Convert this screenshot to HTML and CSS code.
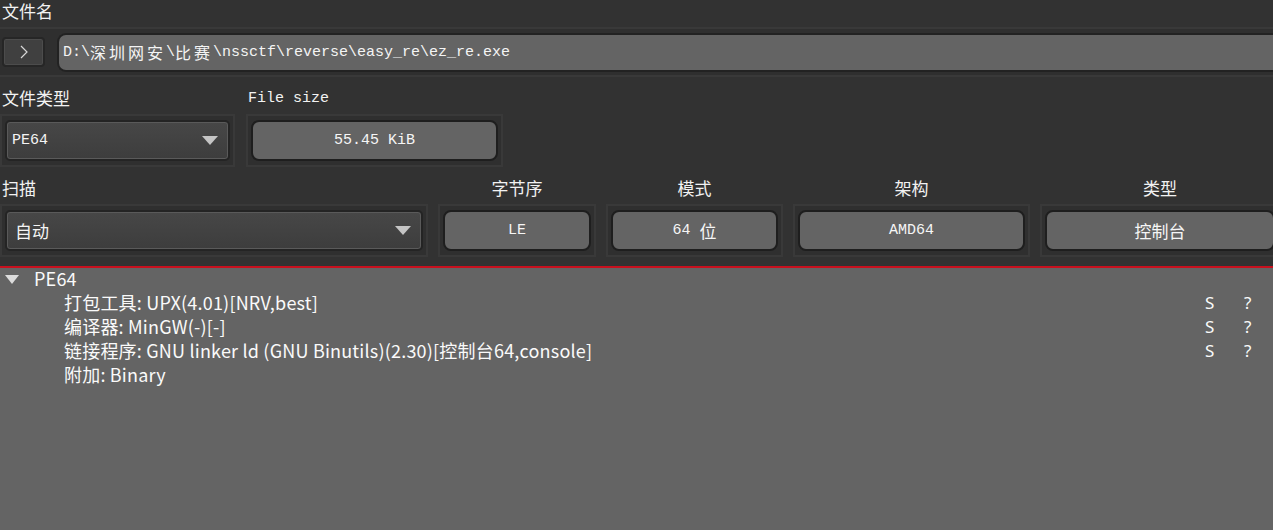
FILE: index.html
```html
<!DOCTYPE html>
<html>
<head>
<meta charset="utf-8">
<link rel="stylesheet" href="styles.css">
</head>
<body>
<div class="page">
  <div class="label top-label">文件名</div>
  <div class="frame path-frame">
    <button class="nav-btn">
      <svg width="10" height="14" viewBox="0 0 10 14"><path d="M2 1 L8 7 L2 13" fill="none" stroke="#d8d8d8" stroke-width="1.2"/></svg>
    </button>
    <div class="path-field">D:\<span class="cj">深圳网安</span>\<span class="cj">比赛</span>\nssctf\reverse\easy_re\ez_re.exe</div>
  </div>

  <div class="row2">
    <div class="col col-type">
      <div class="label">文件类型</div>
      <div class="frame">
        <div class="combo"><span class="mono">PE64</span><span class="arrow"></span></div>
      </div>
    </div>
    <div class="col col-size">
      <div class="label mono-label">File size</div>
      <div class="frame">
        <div class="value mono">55.45 KiB</div>
      </div>
    </div>
  </div>

  <div class="row3">
    <div class="col">
      <div class="label">扫描</div>
      <div class="frame">
        <div class="combo"><span class="cj combo-cj">自动</span><span class="arrow"></span></div>
      </div>
    </div>
    <div class="col">
      <div class="label center">字节序</div>
      <div class="frame"><div class="value mono">LE</div></div>
    </div>
    <div class="col">
      <div class="label center">模式</div>
      <div class="frame"><div class="value mono">64 <span class="cj">位</span></div></div>
    </div>
    <div class="col">
      <div class="label center">架构</div>
      <div class="frame"><div class="value mono">AMD64</div></div>
    </div>
    <div class="col">
      <div class="label center">类型</div>
      <div class="frame"><div class="value mono"><span class="cj">控制台</span></div></div>
    </div>
  </div>

  <div class="tree">
    <div class="tree-row root">
      <span class="tri"></span><span class="name">PE64</span>
    </div>
    <div class="tree-row child">
      <span class="name">打包工具: UPX(4.01)[NRV,best]</span><span class="flag s">S</span><span class="flag q">?</span>
    </div>
    <div class="tree-row child">
      <span class="name">编译器: MinGW(-)[-]</span><span class="flag s">S</span><span class="flag q">?</span>
    </div>
    <div class="tree-row child">
      <span class="name">链接程序: GNU linker ld (GNU Binutils)(2.30)[控制台64,console]</span><span class="flag s">S</span><span class="flag q">?</span>
    </div>
    <div class="tree-row child">
      <span class="name">附加: Binary</span>
    </div>
  </div>
</div>
</body>
</html>
```

FILE: styles.css
```css
html, body {
  margin: 0;
  padding: 0;
  background: #323232;
  overflow: hidden;
}
body {
  width: 1273px;
  height: 530px;
  font-family: "Noto Sans CJK SC", "Noto Sans", sans-serif;
  color: #f0f0f0;
}
.page {
  width: 1280px;
  display: flex;
  flex-direction: column;
  height: 530px;
}
.label {
  font-family: "Noto Sans CJK SC", sans-serif;
  font-size: 17px;
  line-height: 20px;
  color: #f2f2f2;
  padding-left: 2px;
  height: 37px;
  display: flex;
  align-items: flex-end;
  padding-bottom: 6px;
  box-sizing: border-box;
}
.label.center {
  justify-content: center;
  padding-left: 0;
}
.top-label {
  height: 27px;
  align-items: flex-start;
  padding-top: 1px;
  padding-bottom: 0;
}
.mono-label {
  font-family: "Liberation Mono", monospace;
  font-size: 15px;
  padding-bottom: 5px;
}
.mono {
  font-family: "Liberation Mono", "Noto Sans CJK SC", monospace;
  font-size: 15px;
}
.cj {
  font-family: "Noto Sans CJK SC", sans-serif;
  font-size: 17px;
  letter-spacing: 1px;
}
.frame {
  border: 2px solid #393939;
  background: #2f2f2f;
  padding: 4px 3px;
  box-sizing: border-box;
  height: 53px;
  display: flex;
  align-items: center;
}
.path-frame {
  height: 50px;
  padding: 3px 0 3px 2px;
  gap: 12px;
  border-left: none;
  border-right: none;
}
.nav-btn {
  width: 43px;
  height: 30px;
  border: 2px solid #262626;
  border-radius: 4px;
  background: #404040;
  box-shadow: inset 0 0 0 1px #4c4c4c;
  display: flex;
  align-items: center;
  justify-content: center;
  padding: 0;
  flex: none;
}
.path-field {
  flex: 1;
  height: 39px;
  box-sizing: border-box;
  background: #646464;
  border: 2px solid #222;
  border-right: none;
  border-radius: 9px 0 0 9px;
  font-family: "Liberation Mono", "Noto Sans CJK SC", monospace;
  font-size: 15px;
  color: #f4f4f4;
  display: flex;
  align-items: center;
  padding-left: 4px;
  white-space: pre;
}
.path-field .cj {
  letter-spacing: 3px;
  font-size: 16px;
}
.row2 {
  display: flex;
  gap: 11px;
}
.col-type { width: 235px; }
.col-size { width: 257px; }
.col {
  display: flex;
  flex-direction: column;
}
.combo {
  flex: 1;
  height: 41px;
  box-sizing: border-box;
  border: 2px solid #242424;
  border-radius: 5px;
  background: linear-gradient(#474747, #3d3d3d);
  box-shadow: inset 0 0 0 1px #5a5a5a;
  display: flex;
  align-items: center;
  justify-content: space-between;
  padding: 0 10px 0 5px;
  color: #f4f4f4;
}
.combo-cj {
  padding-left: 3px;
  letter-spacing: 0;
}
.arrow {
  width: 0;
  height: 0;
  border-left: 8px solid transparent;
  border-right: 8px solid transparent;
  border-top: 9px solid #c4c4c4;
}
.value {
  flex: 1;
  height: 41px;
  box-sizing: border-box;
  border: 2px solid #1e1e1e;
  border-radius: 8px;
  background: #646464;
  display: flex;
  align-items: center;
  justify-content: center;
  color: #f6f6f6;
  white-space: pre;
}
.value .cj { letter-spacing: 0; }
.row3 {
  display: grid;
  grid-template-columns: 428px 158px 177px 237px 1fr;
  gap: 10px;
}
.tree {
  margin-top: 9px;
  border-top: 2px solid #c8101e;
  background: #646464;
  flex: 1;
}
.tree-row {
  height: 24px;
  box-sizing: border-box;
  padding-bottom: 4px;
  display: flex;
  align-items: center;
  font-size: 18px;
  color: #fafafa;
}
.tree-row.root {
  padding-left: 5px;
}
.tri {
  width: 0;
  height: 0;
  border-left: 7px solid transparent;
  border-right: 7px solid transparent;
  border-top: 9px solid #dcdcdc;
  margin-right: 15px;
  margin-top: 3px;
}
.tree-row.child {
  padding-left: 64px;
}
.name { flex: 1; letter-spacing: 0.2px; }
.flag {
  width: 39px;
  font-family: "Noto Sans", sans-serif;
  font-size: 17px;
}
.flag.q { width: 36px; }
```
